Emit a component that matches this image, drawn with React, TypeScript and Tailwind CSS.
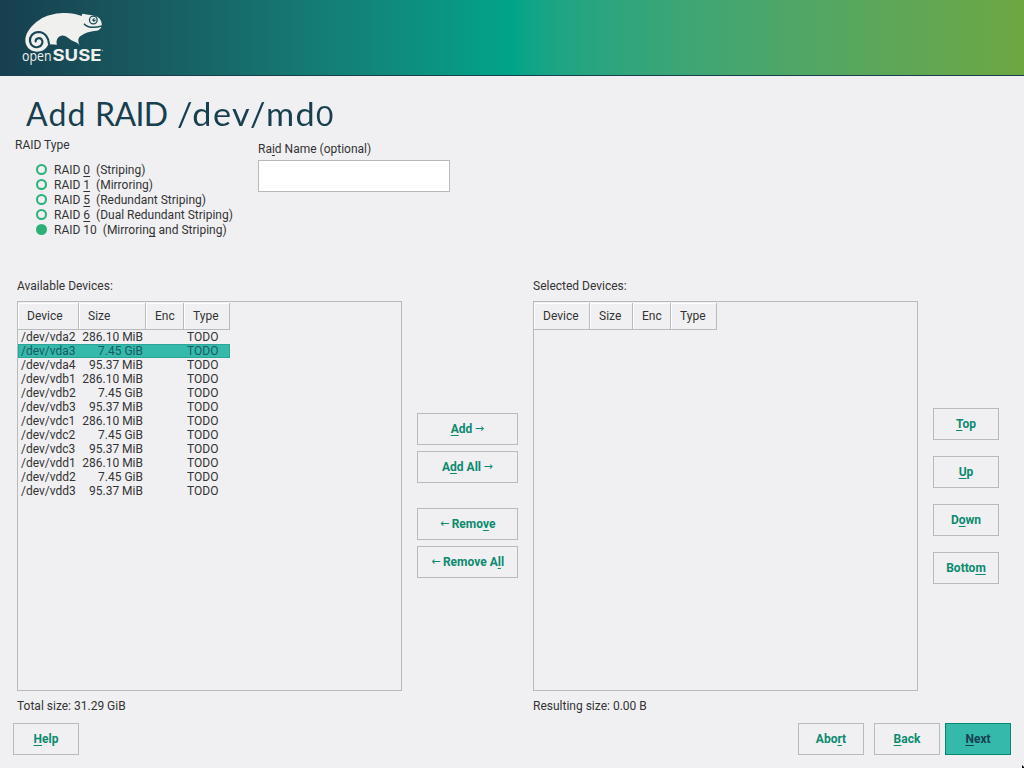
/** Renders a label whose character after "&" is the underlined keyboard mnemonic. */
function Mnemonic({ text }: { text: string }) {
  const i = text.indexOf("&");
  if (i < 0) return <span className="whitespace-pre">{text}</span>;
  return (
    <span className="whitespace-pre">
      {text.slice(0, i)}
      <span className="underline decoration-1 underline-offset-2 [text-decoration-skip-ink:none]">
        {text[i + 1]}
      </span>
      {text.slice(i + 2)}
    </span>
  );
}

function Arrow({ children }: { children: string }) {
  return <span className="w-[10px] font-['DejaVu_Sans',sans-serif] text-[11px] leading-[14px] font-normal">{children}</span>;
}

type ButtonProps = { label: string; before?: string; after?: string; wide?: boolean; primary?: boolean };

function Button({ label, before, after, wide, primary }: ButtonProps) {
  return (
    <button
      className={`flex h-8 items-center justify-center gap-[2px] border pb-px font-bold ${wide ? "w-[101px]" : "w-[66px]"} ${
        primary ? "border-[#008a70] bg-[#35b9ab] text-[#173f4f]" : "border-[#b9babc] text-[#0b8a70]"
      }`}
    >
      {before && <Arrow>{before}</Arrow>}
      <Mnemonic text={label} />
      {after && <Arrow>{after}</Arrow>}
    </button>
  );
}

const raidTypes = [
  "RAID &0  (Striping)",
  "RAID &1  (Mirroring)",
  "RAID &5  (Redundant Striping)",
  "RAID &6  (Dual Redundant Striping)",
  "RAID 10  (Mirrorin&g and Striping)",
];

const sizes = ["286.10 MiB", "7.45 GiB", "95.37 MiB"];
const devices = ["a2", "a3", "a4", "b1", "b2", "b3", "c1", "c2", "c3", "d1", "d2", "d3"].map((n, i) => ({
  name: `/dev/vd${n}`,
  size: sizes[i % 3],
}));

function HeaderCell({ label, width }: { label: string; width: string }) {
  return (
    <div
      className={`h-[27px] border-r border-b border-r-[#b9babc] border-b-[#b9babc] pl-[9px] leading-[27px] shadow-[inset_1px_1px_0_#fff] ${width}`}
    >
      {label}
    </div>
  );
}

function Header({ widths }: { widths: string[] }) {
  return (
    <div className="flex pt-px">
      {["Device", "Size", "Enc", "Type"].map((label, i) => (
        <HeaderCell key={label} label={label} width={widths[i]} />
      ))}
    </div>
  );
}

function Logo() {
  return (
    <svg className="block h-[75px] w-[120px]" viewBox="0 0 120 75" fill="#f0f0ee">
      <mask id="cut" maskUnits="userSpaceOnUse" x="0" y="0" width="264" height="180">
        <rect width="264" height="180" fill="#fff" />
        <path
          d="M87 108C86 90 76 73 56 72C38 72 28 87 30 100C32 113 44 120 54 117C67 114 71 101 64 93C57 87 46 92 47 100"
          fill="none"
          stroke="#000"
          strokeWidth="6.5"
          strokeLinecap="round"
        />
        <path d="M192 47C203 60 224 60 246 54" fill="none" stroke="#000" strokeWidth="4.5" />
        <circle cx="220" cy="36" r="11.5" fill="none" stroke="#000" strokeWidth="4" />
        <circle cx="222" cy="36" r="5" fill="#000" />
        <circle cx="224" cy="34" r="1.8" fill="#fff" />
      </mask>
      <g transform="translate(20 8) scale(0.3333)">
        <path
          mask="url(#cut)"
          d="M187 17L185 24C167 16 146 14 128 15C104 16 77 22 58 36C36 50 18 72 16 94C15 116 30 131 50 131C66 131 78 124 84 111L90 109L111 110C107 99 112 86 124 83C136 80 145 90 154 97C163 102 172 102 180 114C173 101 173 88 183 83C194 76 206 70 231 68C239 66 244 60 245 54C247 44 241 32 236 29C224 20 202 20 187 17Z"
        />
      </g>
      <text x="22" y="61" fontSize="14.5" fontFamily="Open Sans, sans-serif" textLength="29.5" lengthAdjust="spacingAndGlyphs">
        open
      </text>
      <text x="52.5" y="61.3" fontSize="16" fontWeight="700" fontFamily="Inter, sans-serif" textLength="49" lengthAdjust="spacingAndGlyphs">
        SUSE
      </text>
      <circle cx="102.5" cy="50.5" r="0.7" opacity="0.6" />
    </svg>
  );
}

export default function App() {
  return (
    <div className="relative flex h-[768px] w-[1024px] flex-col overflow-hidden bg-[#f0f0f2] font-['Roboto',sans-serif] text-[12px] leading-[14px] text-[#333]">
      <header className="h-[76px] shrink-0 border-b border-[#173f4f] bg-linear-to-r from-[#173f4f] via-[#00a489] to-[#6da741]">
        <Logo />
      </header>

      <h1 className="flex h-[62px] shrink-0 pt-[18px] pl-[26px] font-['Lato',sans-serif] text-[32px] leading-[40px] whitespace-pre text-[#173f4f]">
        <span className="w-[69px] tracking-[1.1px]">Add </span>
        <span className="w-[82px] tracking-[-0.6px]">RAID </span>
        <span className="w-[139px] origin-left scale-x-[1.07] tracking-[1.35px]">/dev/md</span>
        <span className="origin-left scale-x-115 text-[26px] leading-[44px]">0</span>
      </h1>

      <div className="flex h-[141px] shrink-0 pl-[15px]">
        <div className="w-[243px]">
          <div>RAID Type</div>
          <div className="mt-[10px] flex flex-col pl-[21px]">
            {raidTypes.map((t, i) => (
              <label key={t} className="flex h-[15px] items-center">
                <span
                  className={`mr-[7px] size-[11px] rounded-full border-2 border-[#2bb078] ${i === 4 ? "bg-[#2bb078]" : ""}`}
                />
                <Mnemonic text={t} />
              </label>
            ))}
          </div>
        </div>
        <div className="pt-1">
          <div>
            <Mnemonic text="Ra&id Name (optional)" />
          </div>
          <input className="mt-1 block h-8 w-48 border border-[#b9babc] bg-white px-2" />
        </div>
      </div>

      <main className="flex h-[444px] shrink-0 pl-[17px]">
        <section className="w-[385px]">
          <div className="h-[22px]">Available Devices:</div>
          <div className="h-[390px] border border-[#b9babc]">
            <Header widths={["w-[61px]", "w-[67px]", "w-[38px]", "w-[46px]"]} />
            {devices.map((d, i) => (
              <div
                key={d.name}
                className={`flex h-[14px] w-[212px] ${i === 1 ? "bg-[#35b9ab] text-[#1a5a62] shadow-[inset_0_0_0_1px_#2ba598]" : ""}`}
              >
                <span className="w-[61px] pl-[3px]">{d.name}</span>
                <span className="w-[64px] text-right">{d.size}</span>
                <span className="pl-[44px]">TODO</span>
              </div>
            ))}
          </div>
          <div className="mt-2">Total size: 31.29 GiB</div>
        </section>

        <div className="flex w-[131px] flex-col items-center gap-1.5 pt-[134px]">
          <Button wide label="&Add" after="→" />
          <Button wide label="A&dd All" after="→" />
          <div className="h-[13px]" />
          <Button wide label="Remo&ve" before="←" />
          <Button wide label="Remove A&ll" before="←" />
        </div>

        <section className="w-[385px]">
          <div className="h-[22px]">Selected Devices:</div>
          <div className="h-[390px] border border-[#b9babc]">
            <Header widths={["w-[56px]", "w-[43px]", "w-[38px]", "w-[46px]"]} />
          </div>
          <div className="mt-2">Resulting size: 0.00 B</div>
        </section>

        <div className="flex flex-col gap-4 pt-[129px] pl-[15px]">
          <Button label="&Top" />
          <Button label="&Up" />
          <Button label="D&own" />
          <Button label="Botto&m" />
        </div>
      </main>

      <footer className="flex pl-[13px]">
        <Button label="&Help" />
        <div className="ml-[719px] flex">
          <Button label="Abo&rt" />
          <div className="w-[10px]" />
          <Button label="&Back" />
          <div className="w-[5px]" />
          <Button label="&Next" primary />
        </div>
      </footer>

      <svg className="absolute right-0 bottom-0" width="2" height="3">
        <path d="M0 0L2 2V3H0Z" fill="#000" />
      </svg>
    </div>
  );
}
